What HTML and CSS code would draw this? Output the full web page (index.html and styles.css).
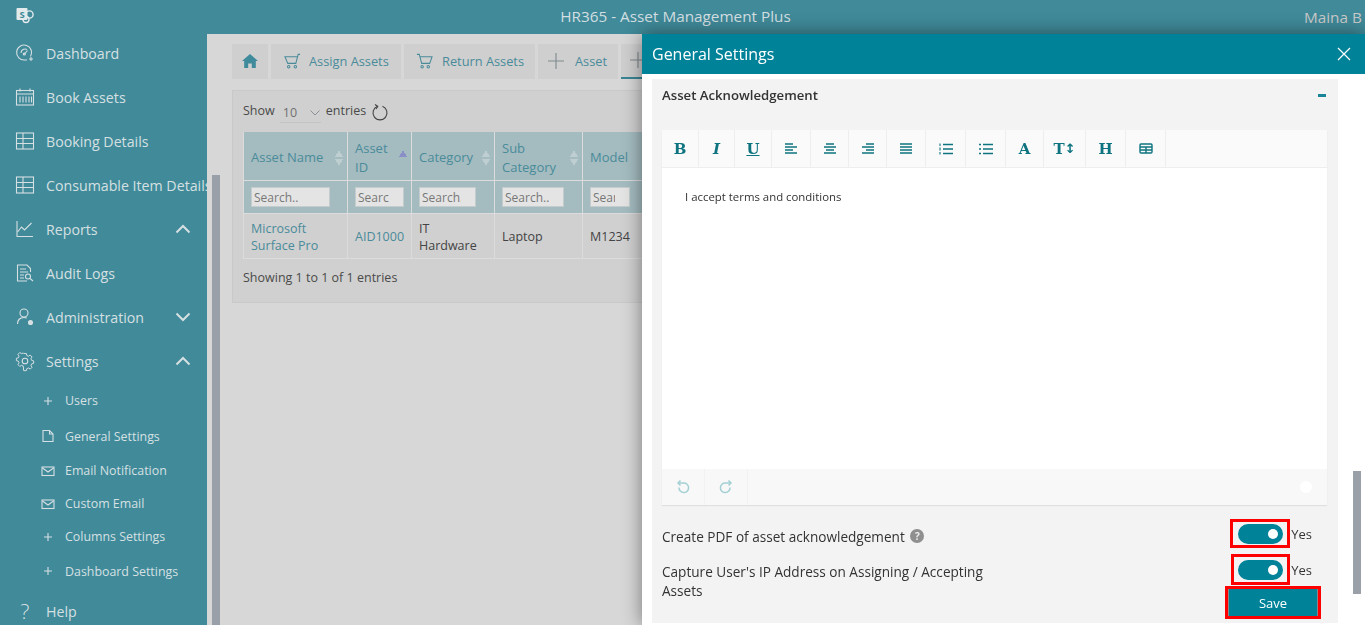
FILE: index.html
```html
<!DOCTYPE html>
<html lang="en">
<head>
    <meta charset="UTF-8">
    <meta name="viewport" content="width=device-width, initial-scale=1.0">
    <title>HR365 - Asset Management Plus</title>
    <link rel="stylesheet" href="styles.css">
</head>
<body>
    <header class="topbar">
        <svg class="logo" viewBox="0 0 18 18" fill="none">
            <circle cx="13.5" cy="8.5" r="3.6" stroke="#e3eaec" stroke-width="1.4"/>
            <circle cx="10" cy="13.5" r="3" stroke="#e3eaec" stroke-width="1.4"/>
            <rect x="0.5" y="2" width="11" height="12" rx="1" fill="#e3eaec"/>
            <text x="6" y="11.5" class="logo-s">S</text>
        </svg>
        <div class="app-title">HR365 - Asset Management Plus</div>
        <div class="user-name">Maina B</div>
    </header>

    <div class="page">
        <nav class="sidebar">
            <a class="nav-item">
                <svg class="nav-icon" viewBox="0 0 18 18"><path d="M14.5 12.5A7.5 7.5 0 1 0 9 16h2"/><path d="M5 9a4 4 0 0 1 6-3.4"/><path d="M8.5 10l3-3.5"/><circle cx="8.3" cy="10" r="1"/><path d="M15 13v4M13 15h4"/></svg>
                <span>Dashboard</span>
            </a>
            <a class="nav-item">
                <svg class="nav-icon" viewBox="0 0 18 18"><rect x="0.5" y="2.5" width="17" height="14.5"/><path d="M0.5 6h17M4 0.5v3M14 0.5v3M4 8.5v6M7 8.5v6M10 8.5v6M13 8.5v6M15.5 8.5v6"/></svg>
                <span>Book Assets</span>
            </a>
            <a class="nav-item">
                <svg class="nav-icon" viewBox="0 0 18 18"><rect x="0.5" y="1" width="17" height="16"/><path d="M0.5 6.5h17M0.5 11.5h17M7 1v16"/></svg>
                <span>Booking Details</span>
            </a>
            <a class="nav-item">
                <svg class="nav-icon" viewBox="0 0 18 18"><rect x="0.5" y="1" width="17" height="16"/><path d="M0.5 6.5h17M0.5 11.5h17M7 1v16"/></svg>
                <span>Consumable Item Details</span>
            </a>
            <a class="nav-item">
                <svg class="nav-icon" viewBox="0 0 18 18"><path d="M1 1v15.5h16"/><path d="M1.5 12l4-5 3 3 7-7"/></svg>
                <span>Reports</span>
                <svg class="chevron" viewBox="0 0 16 10"><path d="M1.5 8.5L8 2l6.500 6.500"/></svg>
            </a>
            <a class="nav-item">
                <svg class="nav-icon" viewBox="0 0 18 18"><path d="M11 17H1.5V1H11l3.5 3.5V8"/><path d="M4 5h6M4 8h8M4 11h4M4 14h4"/><circle cx="12" cy="12.5" r="2.5"/><path d="M14 14.5l3 2.5"/></svg>
                <span>Audit Logs</span>
            </a>
            <a class="nav-item">
                <svg class="nav-icon" viewBox="0 0 18 18"><circle cx="8" cy="5" r="4"/><path d="M1.5 16c0-4 2.5-6.500 6.500-6.500 1 0 2 .2 2.800.5"/><circle cx="14.5" cy="14.5" r="2" class="icon-fill"/></svg>
                <span>Administration</span>
                <svg class="chevron" viewBox="0 0 16 10"><path d="M1.5 1.5L8 8l6.500-6.500"/></svg>
            </a>
            <a class="nav-item">
                <svg class="nav-icon" viewBox="0 0 18 18"><circle cx="9" cy="9" r="2.8"/><path d="M7.5 1h3l.5 2.300 1.900.8 2-1.300 2 2.100-1.200 2 .8 1.900 2.200.5v2.800l-2.200.5-.8 1.900 1.200 2-2 2-2-1.200-1.900.8-.5 2.200h-3L7 15.100l-1.900-.8-2 1.200-2-2 1.200-2-.8-1.900L-.7 9V6.400l2.200-.5.800-1.900-1.200-2 2-2.100 2 1.300 1.900-.8z" transform="translate(1 .6) scale(.89)"/></svg>
                <span>Settings</span>
                <svg class="chevron" viewBox="0 0 16 10"><path d="M1.5 8.5L8 2l6.500 6.500"/></svg>
            </a>

            <ul class="sub-nav">
                <li class="sub-item sub-a">
                    <svg class="sub-icon" viewBox="0 0 14 14"><path d="M7 3v8M3 7h8"/></svg>Users
                </li>
                <li class="sub-item sub-b">
                    <svg class="sub-icon" viewBox="0 0 14 14"><path d="M2 1.500h6.500L12 5v7.500H2z"/><path d="M8.500 1.500V5H12"/></svg>General Settings
                </li>
                <li class="sub-item">
                    <svg class="sub-icon" viewBox="0 0 14 14"><rect x="1" y="3" width="12" height="8.500"/><path d="M1.500 4L7 8l5.500-4"/></svg>Email Notification
                </li>
                <li class="sub-item">
                    <svg class="sub-icon" viewBox="0 0 14 14"><rect x="1" y="3" width="12" height="8.500"/><path d="M1.500 4L7 8l5.500-4"/></svg>Custom Email
                </li>
                <li class="sub-item">
                    <svg class="sub-icon" viewBox="0 0 14 14"><path d="M7 3v8M3 7h8"/></svg>Columns Settings
                </li>
                <li class="sub-item sub-b">
                    <svg class="sub-icon" viewBox="0 0 14 14"><path d="M7 3v8M3 7h8"/></svg>Dashboard Settings
                </li>
            </ul>

            <a class="nav-item">
                <span class="help-mark">?</span>
                <span>Help</span>
            </a>
        </nav>

        <div class="side-track"><div class="side-thumb"></div></div>

        <main class="content">
            <div class="tabs">
                <a class="tab tab-home">
                    <svg class="home-icon" viewBox="0 0 16 14"><path d="M8 0L0 7h2.200v7h4V9.500h3.600V14h4V7H16z"/></svg>
                </a>
                <a class="tab tab-assign">
                    <svg class="cart-icon" viewBox="0 0 18 16"><path d="M17 1h-2l-2.500 9.500H4L1 3.500h13"/><circle cx="5" cy="14" r="1.300"/><circle cx="12" cy="14" r="1.300"/></svg>
                    Assign Assets
                </a>
                <a class="tab tab-return">
                    <svg class="cart-icon" viewBox="0 0 18 16"><path d="M1 1h2.500L6 10.500h8.500L17 3.500H4"/><circle cx="6.500" cy="14" r="1.300"/><circle cx="13" cy="14" r="1.300"/></svg>
                    Return Assets
                </a>
                <a class="tab tab-asset">
                    <svg class="plus-icon" viewBox="0 0 16 16"><path d="M8 0v16M0 8h16"/></svg>
                    Asset
                </a>
                <a class="tab tab-active">
                    <svg class="plus-icon" viewBox="0 0 16 16"><path d="M8 0v16M0 8h16"/></svg>
                </a>
            </div>

            <section class="panel">
                <div class="length-row">
                    <span>Show</span>
                    <span class="length-select">10
                        <svg class="select-caret" viewBox="0 0 10 6"><path d="M.5.5L5 5l4.500-4.500"/></svg>
                    </span>
                    <span>entries</span>
                    <svg class="refresh-icon" viewBox="0 0 16 16"><path d="M5.500 2.300A7 7 0 1 0 10.500 2.300"/><path d="M3 .5L5.800 2.500 4 5"/></svg>
                </div>

                <table class="assets">
                    <colgroup>
                        <col class="col-name"><col class="col-id"><col class="col-cat"><col class="col-sub"><col class="col-model">
                    </colgroup>
                    <thead>
                        <tr class="head-row">
                            <th>Asset Name<span class="sort"></span></th>
                            <th>Asset<br>ID<span class="sort sort-up"></span></th>
                            <th>Category<span class="sort"></span></th>
                            <th>Sub<br>Category<span class="sort"></span></th>
                            <th>Model<span class="sort"></span></th>
                        </tr>
                        <tr class="filter-row">
                            <th><input class="filter filter-name" placeholder="Search.."></th>
                            <th><input class="filter filter-id" placeholder="Search.."></th>
                            <th><input class="filter filter-cat" placeholder="Search.."></th>
                            <th><input class="filter filter-sub" placeholder="Search.."></th>
                            <th><input class="filter filter-model" placeholder="Search.."></th>
                        </tr>
                    </thead>
                    <tbody>
                        <tr>
                            <td><a class="cell-link">Microsoft<br>Surface Pro</a></td>
                            <td><a class="cell-link">AID1000</a></td>
                            <td>IT<br>Hardware</td>
                            <td>Laptop</td>
                            <td>M1234</td>
                        </tr>
                    </tbody>
                </table>
                <p class="table-info">Showing 1 to 1 of 1 entries</p>
            </section>
        </main>
    </div>

    <aside class="drawer">
        <div class="drawer-head">
            <span>General Settings</span>
            <svg class="close-icon" viewBox="0 0 14 14"><path d="M1 1l12 12M13 1L1 13"/></svg>
        </div>
        <div class="drawer-body">
            <div class="settings-panel">
                <div class="ack-head">
                    <span>Asset Acknowledgement</span>
                    <span class="collapse-bar"></span>
                </div>

                <div class="editor">
                    <div class="editor-toolbar">
                        <span class="tool tool-text">B</span>
                        <span class="tool tool-text tool-italic">I</span>
                        <span class="tool tool-text tool-under">U</span>
                        <span class="tool"><svg class="tool-svg" viewBox="0 0 14 12"><path d="M1 1h8M1 4h12M1 7h8M1 10h12"/></svg></span>
                        <span class="tool"><svg class="tool-svg" viewBox="0 0 14 12"><path d="M3 1h8M1 4h12M3 7h8M1 10h12"/></svg></span>
                        <span class="tool"><svg class="tool-svg" viewBox="0 0 14 12"><path d="M5 1h8M1 4h12M5 7h8M1 10h12"/></svg></span>
                        <span class="tool"><svg class="tool-svg" viewBox="0 0 14 12"><path d="M1 1h12M1 4h12M1 7h12M1 10h12"/></svg></span>
                        <span class="tool"><svg class="tool-svg" viewBox="0 0 14 12"><path d="M4 1.500h10M4 6h10M4 10.500h10"/><path class="list-num" d="M1 .5v2.500M1 4.500V7.500M1 9v2.500"/></svg></span>
                        <span class="tool"><svg class="tool-svg" viewBox="0 0 14 12"><path d="M4 1.500h10M4 6h10M4 10.500h10M0 1.500h2M0 6h2M0 10.500h2"/></svg></span>
                        <span class="tool tool-text">A</span>
                        <span class="tool tool-text">T<span class="tool-arrow">↕</span></span>
                        <span class="tool tool-text">H</span>
                        <span class="tool"><svg class="table-svg" viewBox="0 0 14 11"><rect x="1" y="1" width="12" height="9" rx="1"/><path d="M1 4h12M7 4v6M1 7h12"/></svg></span>
                    </div>
                    <div class="editor-text">I accept terms and conditions</div>
                    <div class="editor-foot">
                        <span class="foot-btn">
                            <svg class="history-svg" viewBox="0 0 14 14"><path d="M3 7.500A4.800 4.800 0 1 0 7.500 3H2"/><path d="M4.500 .5L2 3l2.500 2.500"/></svg>
                        </span>
                        <span class="foot-btn">
                            <svg class="history-svg" viewBox="0 0 14 14"><path d="M11 7.500A4.800 4.800 0 1 1 6.500 3H12"/><path d="M9.500 .5L12 3 9.500 5.500"/></svg>
                        </span>
                        <span class="foot-help"></span>
                    </div>
                </div>

                <div class="option-row option-pdf">
                    <div class="option-label">Create PDF of asset acknowledgement <span class="hint">?</span></div>
                    <div class="option-value">
                        <span class="red-box"><span class="toggle"></span></span>
                        <span>Yes</span>
                    </div>
                </div>
                <div class="option-row option-ip">
                    <div class="option-label">Capture User's IP Address on Assigning / Accepting Assets</div>
                    <div class="option-value">
                        <span class="red-box"><span class="toggle"></span></span>
                        <span>Yes</span>
                    </div>
                </div>
                <div class="save-row">
                    <span class="red-box save-box"><button class="save-btn" type="button">Save</button></span>
                </div>
            </div>
        </div>
        <div class="drawer-thumb"></div>
    </aside>
</body>
</html>
```
FILE: styles.css
```css
* {
    box-sizing: border-box;
}
html, body {
    margin: 0;
    height: 100%;
    overflow: hidden;
}
body {
    font-family: "Open Sans", "Noto Sans", Arial, sans-serif;
    font-size: 13px;
    background-color: #d7d7d7;
    color: #444;
}

/* top bar */
.topbar {
    height: 34px;
    background-color: #408a99;
    color: #d3dfe2;
    display: flex;
    align-items: center;
    padding-left: 16px;
}
.logo {
    width: 18px;
    height: 18px;
    margin-top: -4px;
}
.logo-s {
    font-size: 9.5px;
    font-weight: 700;
    fill: #408a99;
    text-anchor: middle;
}
.app-title {
    flex: 1;
    text-align: center;
    font-size: 15.3px;
    padding-left: 13px;
    margin-top: -3px;
}
.user-name {
    font-size: 15.3px;
    color: #c9c9c9;
    width: 61px;
    white-space: nowrap;
}

/* sidebar */
.page {
    display: flex;
    height: 591px;
}
.sidebar {
    width: 207px;
    flex: none;
    background-color: #408a99;
    color: #d6e0e3;
    overflow: hidden;
}
.nav-item {
    display: flex;
    align-items: center;
    height: 44px;
    padding-left: 16px;
    font-size: 14.2px;
    white-space: nowrap;
    position: relative;
}
.nav-item:first-child {
    margin-top: -3px;
}
.nav-item span {
    margin-left: 12px;
}
.nav-icon {
    width: 18px;
    height: 18px;
    flex: none;
    fill: none;
    stroke: #d6e0e3;
    stroke-width: 1.1;
    overflow: visible;
}
.icon-fill {
    fill: #d6e0e3;
}
.chevron {
    position: absolute;
    left: 175px;
    top: 17px;
    width: 16px;
    height: 10px;
    fill: none;
    stroke: #d6e0e3;
    stroke-width: 2;
}
.sub-nav {
    list-style: none;
    margin: 0;
    padding: 0;
}
.sub-item {
    display: flex;
    align-items: center;
    height: 33px;
    padding-left: 41px;
    font-size: 12.4px;
}
.sub-a {
    height: 35px;
}
.sub-b {
    height: 36px;
}
.sub-icon {
    width: 14px;
    height: 14px;
    margin-right: 10px;
    flex: none;
    fill: none;
    stroke: #d6e0e3;
    stroke-width: 1.1;
}
.nav-item .help-mark {
    font-size: 21px;
    font-weight: 300;
    width: 18px;
    text-align: center;
    margin-left: 0;
}

/* sidebar scrollbar */
.side-track {
    width: 13px;
    flex: none;
    padding: 141px 0 0 5px;
}
.side-thumb {
    width: 8px;
    height: 100%;
    background-color: #99a0a8;
}

/* tabs and table */
.content {
    flex: 1;
    min-width: 0;
    padding: 10px 0 0 12px;
    overflow: hidden;
    color: #4a4a4a;
}
.tabs {
    display: flex;
    gap: 3px;
    height: 35px;
}
.tab {
    display: flex;
    align-items: center;
    padding-bottom: 1px;
    background-color: #cfcfcf;
    color: #4a8b9a;
    font-size: 12.8px;
    white-space: nowrap;
}
.tab-home {
    justify-content: center;
    width: 36px;
}
.tab-assign {
    width: 130px;
    padding-left: 13px;
    gap: 8px;
}
.tab-return {
    width: 131px;
    padding-left: 12px;
    gap: 9px;
}
.tab-asset {
    width: 80px;
    padding-left: 10px;
    gap: 11px;
}
.tab-active {
    border-bottom: 2px solid #3a8595;
    width: 200px;
    padding-left: 9px;
}
.home-icon {
    width: 16px;
    height: 14px;
    fill: #3f8b9b;
}
.cart-icon {
    width: 17px;
    height: 16px;
    fill: none;
    stroke: #4a8b9a;
    stroke-width: 1.1;
}
.plus-icon {
    width: 16px;
    height: 16px;
    fill: none;
    stroke: #808a8e;
    stroke-width: 1.1;
}
.panel {
    margin-top: 11px;
    width: 900px;
    height: 213px;
    background-color: #d0d0d0;
    border: 1px solid #c9c9c9;
    padding: 0 10px;
}
.length-row {
    display: flex;
    align-items: center;
    height: 41px;
    gap: 5px;
    font-size: 12.5px;
}
.length-row > span:first-child {
    margin-top: -2px;
}
.length-row > span:nth-child(3) {
    margin-top: -2px;
}
.length-select {
    display: flex;
    align-items: center;
    justify-content: space-between;
    width: 41px;
    height: 23px;
    padding: 3px 1px 0 3px;
    color: #707070;
    border-bottom: 1px solid #c4c4c4;
}
.select-caret {
    width: 10px;
    height: 6px;
    fill: none;
    stroke: #8a9296;
}
.refresh-icon {
    width: 16px;
    height: 16px;
    margin-left: 1px;
    fill: none;
    stroke: #444;
    stroke-width: 1.1;
    overflow: visible;
}
.assets {
    border-collapse: collapse;
    table-layout: fixed;
    width: 500px;
    font-size: 12.5px;
}
.col-name { width: 104px; }
.col-id { width: 64px; }
.col-cat { width: 83px; }
.col-sub { width: 88px; }
.col-model { width: 161px; }
.assets th, .assets td {
    border: 1px solid #dcdcdc;
    border-top: 0;
    text-align: left;
    font-weight: 400;
    padding: 0 7px;
}
.assets .head-row th {
    height: 48px;
    padding-top: 4px;
    background-color: #a4bcc0;
    color: #4a8b9a;
    font-size: 13px;
    line-height: 19px;
    position: relative;
}
.assets .filter-row th {
    height: 33px;
    padding-top: 1px;
    background-color: #a4bcc0;
}
.sort {
    position: absolute;
    right: 4px;
    top: 18px;
    width: 8px;
    height: 16px;
    background:
        linear-gradient(to bottom right, transparent 50%, #bfcfd1 50%) left top / 4px 7px no-repeat,
        linear-gradient(to bottom left, transparent 50%, #bfcfd1 50%) right top / 4px 7px no-repeat,
        linear-gradient(to top right, transparent 50%, #bfcfd1 50%) left bottom / 4px 7px no-repeat,
        linear-gradient(to top left, transparent 50%, #bfcfd1 50%) right bottom / 4px 7px no-repeat;
}
.sort-up {
    background:
        linear-gradient(to bottom right, transparent 50%, #8a8fc8 50%) left top / 4px 7px no-repeat,
        linear-gradient(to bottom left, transparent 50%, #8a8fc8 50%) right top / 4px 7px no-repeat;
}
.filter {
    display: block;
    height: 20px;
    padding: 0 14px 0 2px;
    font: inherit;
    font-size: 12px;
    background-color: #e4e4e4;
    border: 1px solid #c5cccd;
    border-radius: 0;
}
.filter::placeholder {
    color: #777;
}
.filter-name { width: 79px; }
.filter-id { width: 49px; }
.filter-cat { width: 57px; }
.filter-sub { width: 62px; }
.filter-model { width: 40px; }
.assets tbody td {
    height: 45px;
    padding-top: 2px;
    line-height: 17px;
    color: #444;
}
.cell-link {
    color: #4a8b9a;
}
.table-info {
    margin: 10px 0 0;
    font-size: 12.5px;
}

/* drawer */
.drawer {
    position: fixed;
    left: 642px;
    top: 34px;
    width: 723px;
    height: 591px;
    background-color: #fff;
    box-shadow: 0 0 18px rgba(0, 0, 0, 0.45);
}
.drawer-head {
    height: 40px;
    background-color: #008299;
    color: #fff;
    display: flex;
    align-items: center;
    justify-content: space-between;
    padding: 0 14px 0 10px;
    font-size: 16px;
}
.close-icon {
    width: 14px;
    height: 14px;
    fill: none;
    stroke: #fff;
    stroke-width: 1.2;
}
.drawer-body {
    padding: 5px 27px 0 10px;
}
.settings-panel {
    height: 544px;
    background-color: #f3f3f3;
    padding: 0 11px 0 10px;
    color: #333;
    font-size: 13.6px;
}
.ack-head {
    display: flex;
    align-items: center;
    justify-content: space-between;
    height: 32px;
    font-weight: 600;
    font-size: 13.2px;
    padding-right: 1px;
}
.collapse-bar {
    width: 8px;
    height: 3px;
    background-color: #1a8599;
}
.editor {
    margin-top: 19px;
    box-shadow: 0 1px 1px rgba(0, 0, 0, 0.08);
}
.editor-toolbar {
    display: grid;
    grid-template-columns: 37px 36px 37px 39px 38px 38px 39px 40px 40px 38px 42px 40px 40px;
    height: 38px;
    background-color: #fafafa;
    border-bottom: 1px solid #eee;
}
.tool {
    display: flex;
    align-items: center;
    justify-content: center;
    border-right: 1px solid #eee;
    color: #0e7480;
}
.tool-text {
    font-family: "DejaVu Serif", serif;
    font-weight: 700;
    font-size: 15px;
}
.tool-italic {
    font-style: italic;
}
.tool-under {
    text-decoration: underline;
}
.tool-arrow {
    font-size: 13px;
    font-family: "DejaVu Sans", sans-serif;
}
.tool-svg {
    width: 14px;
    height: 12px;
    fill: none;
    stroke: #0e7480;
    stroke-width: 1.7;
    overflow: visible;
}
.list-num {
    stroke-width: 1.1;
}
.table-svg {
    width: 14px;
    height: 11px;
    fill: none;
    stroke: #0e7480;
    stroke-width: 1.4;
}
.editor-text {
    height: 301px;
    background-color: #fff;
    padding: 21px 23px;
    font-size: 11.4px;
    color: #333;
}
.editor-foot {
    display: flex;
    align-items: center;
    height: 36px;
    background-color: #f8f8f8;
}
.foot-btn {
    width: 43px;
    height: 36px;
    display: flex;
    align-items: center;
    justify-content: center;
    border-right: 1px solid #f2f2f2;
}
.history-svg {
    width: 14px;
    height: 14px;
    fill: none;
    stroke: #a3d0d4;
    stroke-width: 1.5;
}
.foot-help {
    margin-left: auto;
    margin-right: 15px;
    width: 12px;
    height: 12px;
    border-radius: 50%;
    background-color: #fff;
}
.option-row {
    display: flex;
    justify-content: space-between;
    align-items: flex-start;
    padding-right: 15px;
}
.option-pdf {
    margin-top: 14px;
    height: 35px;
}
.option-ip {
    height: 32px;
}
.option-label {
    width: 350px;
    line-height: 19px;
    padding-top: 8px;
}
.hint {
    display: inline-block;
    width: 14px;
    height: 14px;
    margin-left: 2px;
    border-radius: 50%;
    background-color: #8f8f8f;
    color: #eee;
    font-size: 10px;
    font-weight: 700;
    line-height: 14px;
    text-align: center;
    vertical-align: 2px;
}
.option-value {
    display: flex;
    align-items: center;
    gap: 1px;
    font-size: 13px;
}
.red-box {
    display: inline-flex;
    align-items: center;
    justify-content: center;
    border: 3px solid #f00;
    width: 60px;
    height: 29px;
}
.option-ip .red-box {
    width: 59px;
    height: 31px;
}
.toggle {
    width: 45px;
    height: 20px;
    border-radius: 10px;
    background-color: #008299;
    position: relative;
}
.toggle::after {
    content: "";
    position: absolute;
    right: 5px;
    top: 5px;
    width: 10px;
    height: 10px;
    border-radius: 50%;
    background-color: #fff;
}
.save-row {
    display: flex;
    justify-content: flex-end;
    padding-right: 6px;
}
.save-box {
    width: 96px;
    height: 33px;
}
.save-btn {
    width: 90px;
    height: 27px;
    background-color: #008299;
    color: #fff;
    border: 1px solid #888;
    border-top: 0;
    border-bottom: 0;
    font: inherit;
    font-size: 13px;
}
.drawer-thumb {
    position: absolute;
    left: 711px;
    top: 437px;
    width: 8px;
    height: 123px;
    background-color: #99a0a8;
}
```
